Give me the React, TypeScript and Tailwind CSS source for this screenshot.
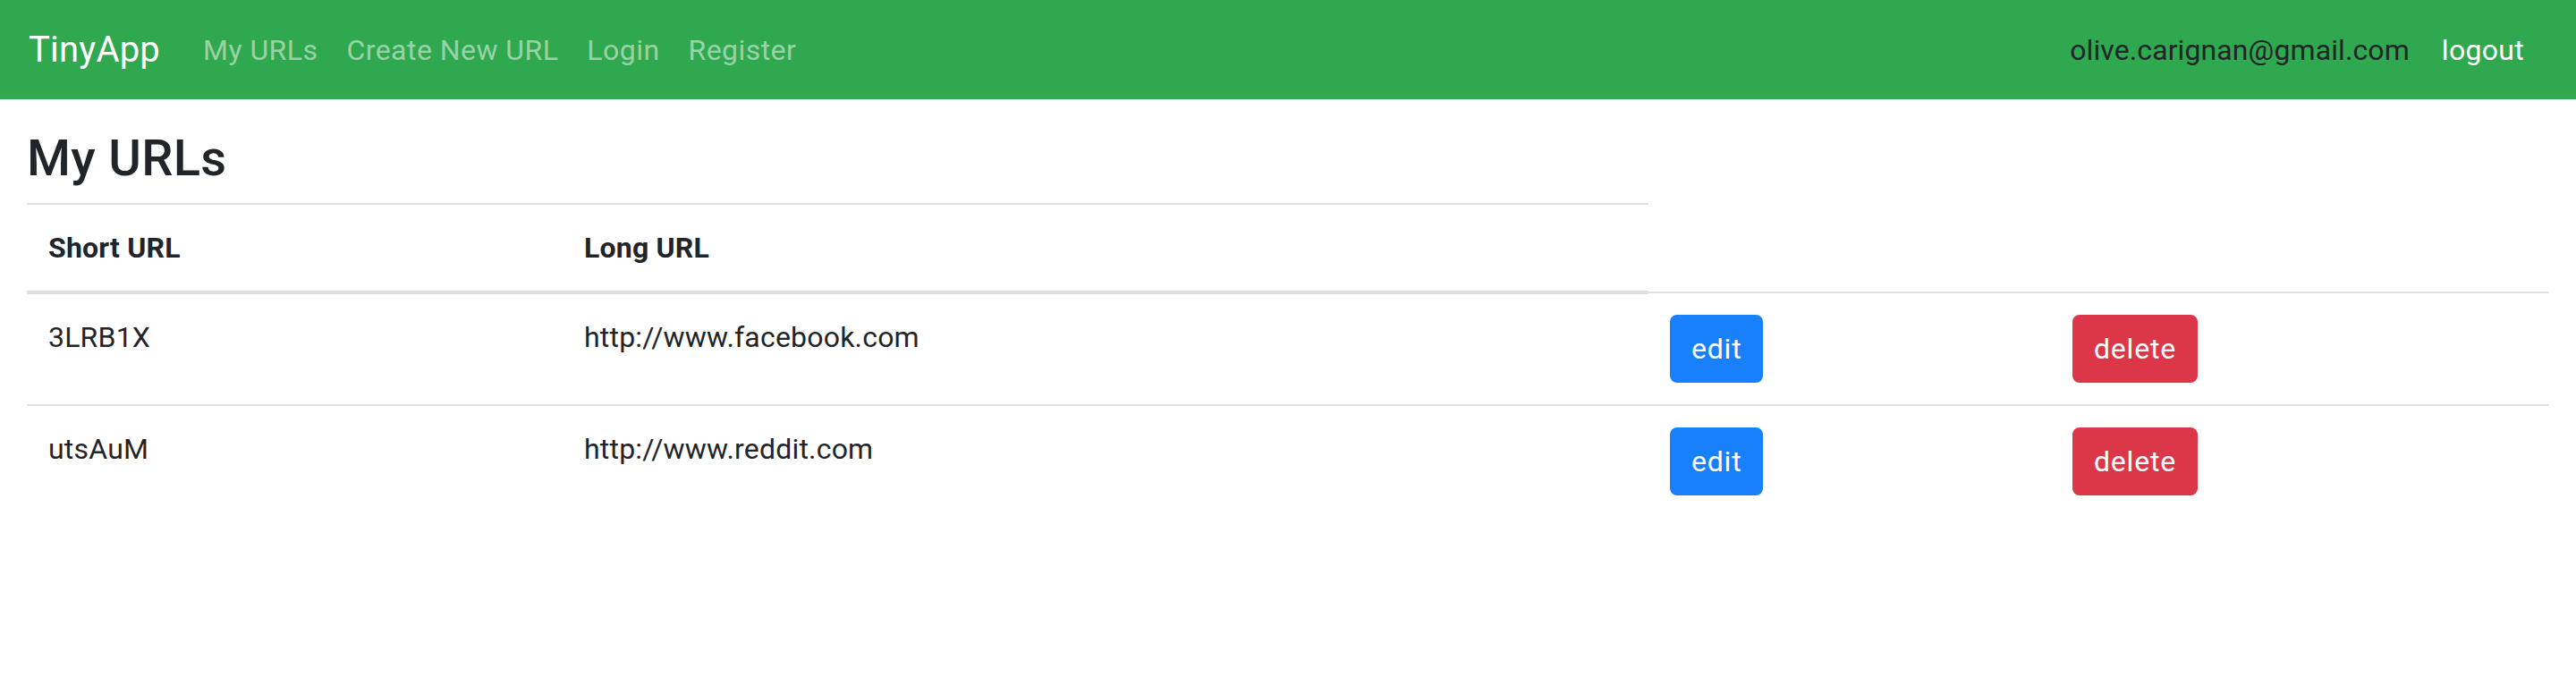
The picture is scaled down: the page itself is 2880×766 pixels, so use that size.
import React from "react";

const links = ["My URLs", "Create New URL", "Login", "Register"];
const rows = [
  { short: "3LRB1X", long: "http://www.facebook.com" },
  { short: "utsAuM", long: "http://www.reddit.com" },
];

export default function App() {
  return (
    <div className="min-h-[766px] bg-white font-['Roboto','Liberation_Sans',sans-serif] text-[#212529]">
      <nav className="flex h-[111px] items-center bg-[#2fa84f] pl-[32px] pr-[42px]">
        <a className="mr-[32px] py-[10px] text-[40px] leading-[60px] tracking-[0.2px] text-white">TinyApp</a>
        <div className="flex">
          {links.map((l) => (
            <a key={l} className="px-[16px] py-[16px] text-[32px] leading-[48px] tracking-[0.45px] text-white/50">
              {l}
            </a>
          ))}
        </div>
        <div className="ml-auto flex items-center">
          <span className="text-[32px] leading-[48px] tracking-[0.1px] text-[#212529]">olive.carignan@gmail.com</span>
          <a className="ml-[20px] px-[16px] py-[16px] text-[32px] leading-[48px] tracking-[0.3px] text-white">logout</a>
        </div>
      </nav>
      <main className="px-[30px] pt-[33px]">
        <h3 className="mb-[16px] text-[56px] font-medium leading-[67px] tracking-[0.3px]">My URLs</h3>
        <table className="w-full table-fixed border-collapse text-[32px] leading-[48px] tracking-[0.2px]">
          <colgroup>
            <col className="w-[599px]" />
            <col className="w-[1214px]" />
            <col className="w-[450px]" />
            <col className="w-[557px]" />
          </colgroup>
          <thead>
            <tr>
              <th className="border-t-2 border-b-4 border-[#dee2e6] p-[24px] text-left align-bottom font-bold">Short URL</th>
              <th className="border-t-2 border-b-4 border-[#dee2e6] p-[24px] text-left align-bottom font-bold">Long URL</th>
            </tr>
          </thead>
          <tbody>
            {rows.map((r) => (
              <tr key={r.short}>
                <td className="border-t-2 border-[#dee2e6] p-[24px] align-top">{r.short}</td>
                <td className="border-t-2 border-[#dee2e6] p-[24px] align-top">{r.long}</td>
                <td className="border-t-2 border-[#dee2e6] p-[24px] align-top">
                  <button className="rounded-[8px] bg-[#1880fb] px-[24px] py-[12px] text-[32px] leading-[52px] tracking-[0.8px] text-white">
                    edit
                  </button>
                </td>
                <td className="border-t-2 border-[#dee2e6] p-[24px] align-top">
                  <button className="rounded-[8px] bg-[#db3749] px-[24px] py-[12px] text-[32px] leading-[52px] tracking-[0.8px] text-white">
                    delete
                  </button>
                </td>
              </tr>
            ))}
          </tbody>
        </table>
      </main>
    </div>
  );
}
